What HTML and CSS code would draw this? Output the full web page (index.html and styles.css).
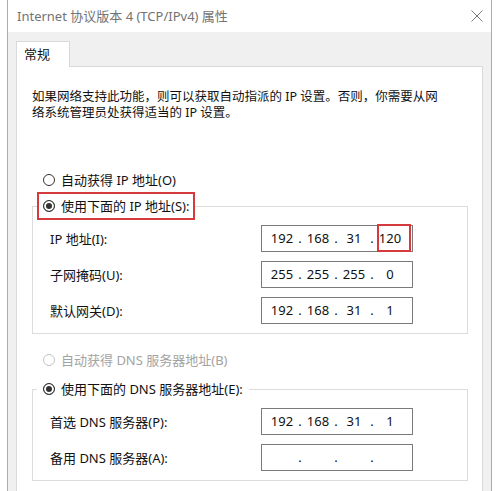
FILE: index.html
```html
<!DOCTYPE html>
<html lang="zh-CN">

    <head>
        <meta charset="UTF-8">
        <meta name="viewport" content="width=device-width, initial-scale=1.0">
        <title>Internet 协议版本 4 (TCP/IPv4) 属性</title>
        <link rel="stylesheet" href="styles.css">
    </head>

    <body>
        <div class="window">
            <div class="titlebar">
                <span class="title">Internet 协议版本 4 (TCP/IPv4) 属性</span>
                <svg class="close" width="12" height="12" viewBox="0 0 12 12">
                    <path d="M0.5 0.5L11.5 11.5M11.5 0.5L0.5 11.5" stroke="#7d7d7d" stroke-width="1" fill="none"/>
                </svg>
            </div>

            <div class="dialog-body">
                <div class="tab">常规</div>
                <div class="pane">
                    <p class="desc">如果网络支持此功能，则可以获取自动指派的 IP 设置。否则，你需要从网<br>络系统管理员处获得适当的 IP 设置。</p>

                    <div class="radio-row"><span class="radio"></span>自动获得 IP 地址(O)</div>

                    <fieldset class="group">
                        <legend class="legend marked">
                            <span class="legend-inner"><span class="radio checked"></span>使用下面的 IP 地址(S):</span>
                        </legend>
                        <div class="field-row">
                            <span class="label">IP 地址(I):</span>
                            <div class="ip-box">
                                <span class="oct">192</span><span class="dot">.</span>
                                <span class="oct">168</span><span class="dot">.</span>
                                <span class="oct">31</span><span class="dot">.</span>
                                <span class="oct">120</span>
                                <span class="highlight"></span>
                            </div>
                        </div>
                        <div class="field-row">
                            <span class="label">子网掩码(U):</span>
                            <div class="ip-box">
                                <span class="oct">255</span><span class="dot">.</span>
                                <span class="oct">255</span><span class="dot">.</span>
                                <span class="oct">255</span><span class="dot">.</span>
                                <span class="oct">0</span>
                            </div>
                        </div>
                        <div class="field-row">
                            <span class="label">默认网关(D):</span>
                            <div class="ip-box">
                                <span class="oct">192</span><span class="dot">.</span>
                                <span class="oct">168</span><span class="dot">.</span>
                                <span class="oct">31</span><span class="dot">.</span>
                                <span class="oct">1</span>
                            </div>
                        </div>
                    </fieldset>

                    <div class="radio-row disabled"><span class="radio"></span>自动获得 DNS 服务器地址(B)</div>

                    <fieldset class="group dns">
                        <legend class="legend">
                            <span class="legend-inner"><span class="radio checked"></span>使用下面的 DNS 服务器地址(E):</span>
                        </legend>
                        <div class="field-row">
                            <span class="label">首选 DNS 服务器(P):</span>
                            <div class="ip-box">
                                <span class="oct">192</span><span class="dot">.</span>
                                <span class="oct">168</span><span class="dot">.</span>
                                <span class="oct">31</span><span class="dot">.</span>
                                <span class="oct">1</span>
                            </div>
                        </div>
                        <div class="field-row">
                            <span class="label">备用 DNS 服务器(A):</span>
                            <div class="ip-box">
                                <span class="oct"></span><span class="dot">.</span>
                                <span class="oct"></span><span class="dot">.</span>
                                <span class="oct"></span><span class="dot">.</span>
                                <span class="oct"></span>
                            </div>
                        </div>
                    </fieldset>
                </div>
            </div>
        </div>
    </body>

</html>
```

FILE: styles.css
```css
* {
    box-sizing: border-box;
}

html,
body {
    margin: 0;
    height: 491px;
    overflow: hidden;
    background-color: #ffffff;
}

body {
    font-family: "Noto Sans", "Noto Sans CJK SC", sans-serif;
    font-size: 13px;
    color: #111111;
}

.window {
    display: flex;
    flex-direction: column;
    margin-left: 7px;
    width: 485px;
    height: 491px;
    overflow: hidden;
    border-left: 1px solid #ababab;
    border-right: 1px solid #ababab;
}

.titlebar {
    flex: none;
    height: 32px;
    display: flex;
    align-items: center;
    justify-content: space-between;
    padding-left: 9px;
    padding-right: 8px;
    background-color: #ffffff;
}

.title {
    color: #737373;
    font-size: 13px;
    line-height: 20px;
}

.close {
    display: block;
}

.dialog-body {
    flex: 1;
    display: flex;
    flex-direction: column;
    background-color: #f0f0f0;
    padding: 9px 8px 0 8px;
}

.tab {
    position: relative;
    z-index: 1;
    width: 54px;
    height: 26px;
    margin-bottom: -1px;
    padding-left: 7px;
    line-height: 24px;
    background-color: #ffffff;
    border: 1px solid #d9d9d9;
    border-bottom: 0;
}

.pane {
    flex: 1;
    background-color: #ffffff;
    border: 1px solid #d9d9d9;
    border-bottom: 0;
    padding: 0 15px 0 15px;
}

.desc {
    margin: 0;
    padding-top: 22px;
    font-size: 12.5px;
    line-height: 16px;
    white-space: nowrap;
}

.radio-row {
    display: flex;
    align-items: center;
    gap: 6px;
    height: 20px;
    margin-top: 49px;
    padding-left: 11px;
    line-height: 20px;
}

.radio {
    display: inline-block;
    flex: none;
    width: 12px;
    height: 12px;
    border: 1px solid #333333;
    border-radius: 50%;
    background-color: #ffffff;
}

.radio.checked {
    background-color: #333333;
    box-shadow: inset 0 0 0 2px #ffffff;
}

.radio-row.disabled {
    margin-top: 16px;
    color: #a3a3a3;
}

.radio-row.disabled .radio {
    border-color: #c4c4c4;
}

.group {
    width: 436px;
    min-width: 0;
    margin: 2px 0 0 0;
    padding: 5px 0 9px 0;
    border: 1px solid #dcdcdc;
}

.group.dns {
    margin-top: 5px;
}

.legend {
    margin-left: 4px;
    padding: 0 4px 0 4px;
    height: 28px;
    border: 2px solid transparent;
}

.legend.marked {
    border-color: #d63a3c;
}

.legend-inner {
    display: flex;
    align-items: center;
    gap: 6px;
    height: 24px;
    line-height: 20px;
}

.field-row {
    display: grid;
    grid-template-columns: 211px 152px;
    align-items: center;
    padding-left: 17px;
    height: 27px;
}

.field-row + .field-row {
    margin-top: 9px;
}

.label {
    line-height: 20px;
}

.ip-box {
    position: relative;
    display: flex;
    height: 27px;
    padding-left: 5px;
    border: 1px solid #7a7a7a;
    background-color: #ffffff;
    line-height: 25px;
}

.oct {
    width: 30px;
    text-align: center;
}

.dot {
    width: 6px;
    text-align: center;
}

.highlight {
    position: absolute;
    left: 115px;
    top: -2px;
    width: 34px;
    height: 28px;
    border: 2px solid #d63a3c;
}
```
